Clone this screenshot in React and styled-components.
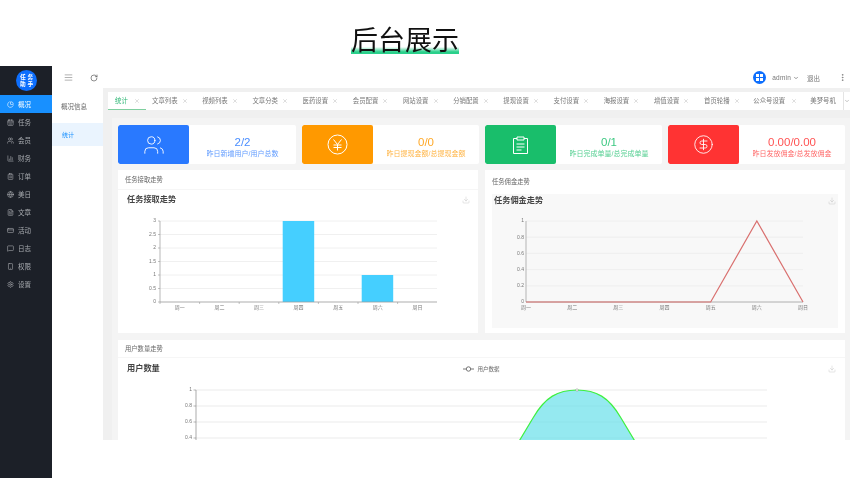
import React from 'react';
import styled, { createGlobalStyle } from 'styled-components';
import {
  AlignJustify,
  BarChart3,
  CalendarDays,
  ChevronDown,
  ClipboardList,
  Download,
  FileText,
  Globe,
  MessageSquare,
  MoreVertical,
  PieChart,
  RotateCw,
  Settings,
  Smartphone,
  Users,
  X,
  CreditCard,
  CircleDollarSign,
} from 'lucide-react';

const Global = createGlobalStyle`
  html, body {
    margin: 0;
    background: #fff;
    overflow: hidden;
    font-family: "Liberation Sans", "Noto Sans CJK SC", sans-serif;
  }
  * { box-sizing: border-box; }
`;

const s = {
  Page: styled.div`
    width: 850px;
    height: 478px;
    overflow: hidden;
    background: #fff;
    filter: blur(0.35px);
  `,
  TitleBar: styled.div`
    height: 66px;
    padding: 23px 0 0 351px;
  `,
  Title: styled.h1`
    display: inline-block;
    margin: 0;
    font-size: 27px;
    line-height: 31px;
    font-weight: 400;
    color: #111;
    font-family: "Noto Sans CJK SC", sans-serif;
    background: linear-gradient(0deg, #2ad08b, #2ad08b 30%, rgba(95, 232, 176, 0)) no-repeat left bottom / 100% 7px;
  `,
  Frame: styled.div`
    display: flex;
    height: 412px;
  `,
  Sidebar: styled.nav`
    flex: 0 0 52px;
    background: #1c2028;
  `,
  LogoWrap: styled.div`
    height: 29px;
    display: flex;
    align-items: center;
    justify-content: center;
  `,
  Logo: styled.div`
    width: 21px;
    height: 21px;
    border-radius: 50%;
    background: #0d6efd;
    display: grid;
    grid-template-columns: 1fr 1fr;
    padding: 4.6px;
    gap: 1.6px;
    color: #fff;
    font-size: 5.7px;
    font-weight: 700;
    line-height: 1;
    text-align: center;
  `,
  MenuItem: styled.div`
    height: 18px;
    display: flex;
    align-items: center;
    gap: 4px;
    padding-left: 7px;
    font-size: 6.5px;
    color: ${(p) => (p.$active ? '#fff' : '#a8abb0')};
    background: ${(p) => (p.$active ? '#1890ff' : 'transparent')};
  `,
  Main: styled.div`
    flex: 1;
    min-width: 0;
    display: flex;
    flex-direction: column;
  `,
  Header: styled.header`
    flex: 0 0 22px;
    display: flex;
    align-items: center;
    padding: 1px 3px 0 12px;
    color: #555;
  `,
  HeaderTool: styled.div`
    width: 26px;
    display: flex;
    justify-content: flex-start;
  `,
  HeaderRight: styled.div`
    margin-left: auto;
    display: flex;
    align-items: center;
    font-size: 6.5px;
    color: #777;
  `,
  UserName: styled.span`
    margin: 0 2px 0 6px;
    letter-spacing: 0.2px;
  `,
  Logout: styled.span`
    margin: 0 18px 0 8px;
  `,
  Body: styled.div`
    flex: 1;
    min-height: 0;
    display: flex;
  `,
  SubNav: styled.div`
    flex: 0 0 51px;
    background: #fff;
  `,
  SubTitle: styled.div`
    height: 35px;
    display: flex;
    align-items: center;
    padding-left: 9px;
    font-size: 6.5px;
    color: #666;
  `,
  SubItem: styled.div`
    height: 23px;
    display: flex;
    align-items: center;
    padding-left: 10px;
    font-size: 6px;
    color: #1890ff;
    background: #eaf4fe;
  `,
  Content: styled.main`
    flex: 1;
    min-width: 0;
    height: 352px;
    overflow: hidden;
    background: #f0f0f0;
    padding: 4px 0 0 5px;
  `,
  Tabs: styled.div`
    height: 18px;
    background: #fff;
    display: flex;
    position: relative;
    overflow: hidden;
  `,
  Tab: styled.div`
    flex: 0 0 ${(p) => p.$w}px;
    display: flex;
    align-items: center;
    padding-left: ${(p) => p.$pad}px;
    font-size: 6.4px;
    white-space: nowrap;
    color: ${(p) => (p.$active ? '#2bb673' : '#777')};
    border-bottom: 1px solid ${(p) => (p.$active ? '#7fcf9f' : 'transparent')};
    & > svg {
      margin-left: ${(p) => p.$gap}px;
      color: #bdbdbd;
    }
  `,
  TabArrow: styled.div`
    position: absolute;
    right: 0;
    top: 0;
    width: 7px;
    height: 18px;
    background: #fff;
    border-left: 1px solid #e4e4e4;
    color: #888;
    display: flex;
    align-items: center;
  `,
  Panel: styled.div`
    margin: 8px 0 0 4px;
    padding: 7px 5px 0 6px;
    background: #f4f4f4;
    display: flex;
    flex-direction: column;
    gap: 6px;
  `,
  StatRow: styled.div`
    display: grid;
    grid-template-columns: 178px 177px 177px 177px;
    column-gap: 6px;
    height: 39px;
  `,
  StatCard: styled.div`
    display: flex;
    background: #fff;
    border-radius: 2px;
    overflow: hidden;
    color: ${(p) => p.$color};
  `,
  StatIcon: styled.div`
    flex: 0 0 71px;
    display: flex;
    align-items: center;
    justify-content: center;
    background: ${(p) => p.$color};
    color: #fff;
    border-radius: 2px;
  `,
  StatText: styled.div`
    flex: 1;
    display: flex;
    flex-direction: column;
    align-items: center;
    justify-content: center;
    padding-top: 6px;
  `,
  StatValue: styled.div`
    font-size: 11.5px;
    line-height: 13px;
    opacity: 0.85;
  `,
  StatLabel: styled.div`
    font-size: 7px;
    line-height: 10px;
    opacity: 0.75;
    white-space: nowrap;
  `,
  ChartRow: styled.div`
    display: grid;
    grid-template-columns: 360px 360px;
    column-gap: 7px;
    height: 163px;
    margin-bottom: 1px;
  `,
  Card: styled.section`
    background: #fff;
    min-width: 0;
  `,
  CardHead: styled.div`
    height: ${(p) => p.$h}px;
    padding-left: 7px;
    display: flex;
    align-items: center;
    font-size: 6.3px;
    color: #666;
    border-bottom: 1px solid ${(p) => (p.$line ? '#f6f6f6' : 'transparent')};
  `,
  ShadedPlot: styled.div`
    margin: 0 7px;
    height: 134px;
    background: #f8f8f8;
  `,
  PlotHead: styled.div`
    height: ${(p) => p.$h}px;
    padding: 0 ${(p) => p.$right}px ${(p) => p.$lift || 0}px ${(p) => p.$left}px;
    display: grid;
    grid-template-columns: 1fr auto 1fr;
    align-items: center;
    color: #bbb;
    & > svg { justify-self: end; }
  `,
  PlotTitle: styled.div`
    font-size: 8.2px;
    line-height: 10px;
    font-weight: 700;
    color: #444;
  `,
  Legend: styled.div`
    display: flex;
    align-items: center;
    gap: 3px;
    font-size: 5.5px;
    color: #666;
  `,
  Plot: styled.svg`
    display: block;
    font-family: "Liberation Sans", "Noto Sans CJK SC", sans-serif;
  `,
};

const MENU = [
  ['概况', PieChart],
  ['任务', CalendarDays],
  ['会员', Users],
  ['财务', BarChart3],
  ['订单', ClipboardList],
  ['美日', Globe],
  ['文章', FileText],
  ['活动', CreditCard],
  ['日志', MessageSquare],
  ['权限', Smartphone],
  ['设置', Settings],
];

const TABS = ['文章列表', '视频列表', '文章分类', '医药设置', '会员配置', '网站设置', '分销配置', '提现设置', '支付设置', '海报设置', '增值设置', '首页轮播'];
const DAYS = ['周一', '周二', '周三', '周四', '周五', '周六', '周日'];

const Avatar = () => (
  <svg width="13" height="13" viewBox="0 0 13 13">
    <circle cx="6.5" cy="6.5" r="6.5" fill="#0d6efd" />
    <rect x="3" y="3" width="3" height="3" fill="#fff" />
    <rect x="7" y="3" width="3" height="3" fill="#fff" />
    <rect x="3" y="7" width="3" height="3" fill="#fff" />
    <rect x="7" y="7" width="3" height="3" fill="#fff" />
  </svg>
);

const YenIcon = () => (
  <svg width="21" height="21" viewBox="0 0 21 21" fill="none" stroke="currentColor" strokeWidth="1">
    <circle cx="10.5" cy="10.5" r="9.5" />
    <path d="M6.5 5.5l4 5 4-5M6.5 11h8M6.5 13.5h8M10.5 10.5v6" />
  </svg>
);

const BoardIcon = () => (
  <svg width="17" height="18" viewBox="0 0 17 18" fill="none" stroke="currentColor" strokeWidth="1">
    <path d="M5 2.5H1.5v15h14v-15H12" />
    <path d="M5 1h7v3H5zM4.5 8h8M4.5 11h8M4.5 14h5" />
  </svg>
);

const STATS = [
  { color: '#2979ff', value: '2/2', label: '昨日新增用户/用户总数', icon: <Users size={22} strokeWidth={1} /> },
  { color: '#ff9900', value: '0/0', label: '昨日提现金额/总提现金额', icon: <YenIcon /> },
  { color: '#19be6b', value: '0/1', label: '昨日完成单量/总完成单量', icon: <BoardIcon /> },
  { color: '#ff3333', value: '0.00/0.00', label: '昨日发放佣金/总发放佣金', icon: <CircleDollarSign size={21} strokeWidth={1} /> },
];

// shared axis text for the three plots
const Tick = ({ x, y, anchor = 'end', children }) => (
  <text x={x} y={y} fontSize="5" fill="#777" textAnchor={anchor} dominantBaseline="middle">{children}</text>
);

const TaskBars = () => {
  const ys = [['3', 221], ['2.5', 234.5], ['2', 248], ['1.5', 261.5], ['1', 275], ['0.5', 288.5], ['0', 302]];
  const step = 39.6;
  return (
    <s.Plot width="360" height="123" viewBox="118 210 360 123">
      {ys.map(([label, y]) => (
        <g key={label}>
          <line x1="160" x2="437" y1={y} y2={y} stroke="#ececec" strokeWidth="0.8" />
          <line x1="158" x2="160" y1={y} y2={y} stroke="#999" strokeWidth="0.6" />
          <Tick x={156} y={y}>{label}</Tick>
        </g>
      ))}
      <rect x="282.7" y="221" width="31.5" height="81" fill="#45cfff" />
      <rect x="361.7" y="275" width="31.5" height="27" fill="#45cfff" />
      <line x1="160" x2="160" y1="221" y2="302" stroke="#999" strokeWidth="0.7" />
      <line x1="160" x2="437" y1="302" y2="302" stroke="#999" strokeWidth="0.7" />
      {DAYS.map((d, i) => (
        <g key={d}>
          <line x1={160 + step * i} x2={160 + step * i} y1="302" y2="304" stroke="#999" strokeWidth="0.6" />
          <Tick x={179.8 + step * i} y={307.5} anchor="middle">{d}</Tick>
        </g>
      ))}
    </s.Plot>
  );
};

const CommissionLine = () => {
  const ys = [['1', 221], ['0.8', 237.2], ['0.6', 253.4], ['0.4', 269.6], ['0.2', 285.8], ['0', 302]];
  const step = 46.17;
  const px = [0, 1, 2, 3, 4, 5, 6].map((i) => 526 + step * i);
  const pts = px.map((x, i) => `${x},${i === 5 ? 221 : 302}`).join(' ');
  return (
    <s.Plot width="346" height="121" viewBox="492 207 346 121">
      {ys.map(([label, y]) => (
        <g key={label}>
          <line x1="526" x2="803" y1={y} y2={y} stroke="#ececec" strokeWidth="0.8" />
          <Tick x={524} y={y}>{label}</Tick>
        </g>
      ))}
      <line x1="526" x2="526" y1="221" y2="302" stroke="#999" strokeWidth="0.7" />
      <line x1="526" x2="803" y1="302" y2="302" stroke="#999" strokeWidth="0.7" />
      <polyline points={pts} fill="none" stroke="#d9706f" strokeWidth="1.2" />
      {DAYS.map((d, i) => (
        <Tick key={d} x={px[i]} y={307.5} anchor="middle">{d}</Tick>
      ))}
    </s.Plot>
  );
};

const UserArea = () => {
  const ys = [['1', 390], ['0.8', 406], ['0.6', 422], ['0.4', 438]];
  const curve = 'M518 443 L533 418 C545 397 558 390 577 390 C596 390 609 397 621 418 L636 443';
  return (
    <s.Plot width="727" height="60" viewBox="118 380 727 60">
      {ys.map(([label, y]) => (
        <g key={label}>
          <line x1="196" x2="767" y1={y} y2={y} stroke="#e6e6e6" strokeWidth="0.8" />
          <line x1="193.5" x2="196" y1={y} y2={y} stroke="#888" strokeWidth="0.6" />
          <Tick x={192} y={y}>{label}</Tick>
        </g>
      ))}
      <line x1="196" x2="196" y1="390" y2="440" stroke="#888" strokeWidth="0.7" />
      <path d={`${curve} Z`} fill="#5cdde8" fillOpacity="0.65" />
      <path d={curve} fill="none" stroke="#3ff03f" strokeWidth="1.2" />
      <circle cx="577" cy="390" r="1.2" fill="#fff" stroke="#888" strokeWidth="0.5" />
    </s.Plot>
  );
};

const LegendMark = () => (
  <svg width="11" height="6" viewBox="0 0 11 6" fill="none" stroke="#555" strokeWidth="0.8">
    <path d="M0 3h3M8 3h3" />
    <circle cx="5.5" cy="3" r="2.2" fill="#fff" />
  </svg>
);

const App = () => (
  <s.Page>
    <Global />
    <s.TitleBar>
      <s.Title>后台展示</s.Title>
    </s.TitleBar>
    <s.Frame>
      <s.Sidebar>
        <s.LogoWrap>
          <s.Logo>
            <span>任</span><span>务</span><span>助</span><span>手</span>
          </s.Logo>
        </s.LogoWrap>
        {MENU.map(([label, Icon], i) => (
          <s.MenuItem key={label} $active={i === 0}>
            <Icon size={7} />
            <span>{label}</span>
          </s.MenuItem>
        ))}
      </s.Sidebar>
      <s.Main>
        <s.Header>
          <s.HeaderTool><AlignJustify size={9} strokeWidth={1.2} /></s.HeaderTool>
          <s.HeaderTool><RotateCw size={8} /></s.HeaderTool>
          <s.HeaderRight>
            <Avatar />
            <s.UserName>admin</s.UserName>
            <ChevronDown size={6} strokeWidth={3} />
            <s.Logout>退出</s.Logout>
            <MoreVertical size={9} />
          </s.HeaderRight>
        </s.Header>
        <s.Body>
          <s.SubNav>
            <s.SubTitle>概况信息</s.SubTitle>
            <s.SubItem>统计</s.SubItem>
          </s.SubNav>
          <s.Content>
            <s.Tabs>
              <s.Tab $w={38} $pad={7} $gap={6} $active>统计<X size={6} /></s.Tab>
              {TABS.map((t) => (
                <s.Tab key={t} $w={50.2} $pad={6} $gap={4}>{t}<X size={6} /></s.Tab>
              ))}
              <s.Tab $w={57} $pad={5} $gap={6}>公众号设置<X size={6} /></s.Tab>
              <s.Tab $w={40} $pad={5} $gap={4}>美梦号机</s.Tab>
              <s.TabArrow><ChevronDown size={6} /></s.TabArrow>
            </s.Tabs>
            <s.Panel>
              <s.StatRow>
                {STATS.map((st) => (
                  <s.StatCard key={st.label} $color={st.color}>
                    <s.StatIcon $color={st.color}>{st.icon}</s.StatIcon>
                    <s.StatText>
                      <s.StatValue>{st.value}</s.StatValue>
                      <s.StatLabel>{st.label}</s.StatLabel>
                    </s.StatText>
                  </s.StatCard>
                ))}
              </s.StatRow>
              <s.ChartRow>
                <s.Card>
                  <s.CardHead $h={20} $line>任务接取走势</s.CardHead>
                  <s.PlotHead $h={20} $left={9} $right={8}>
                    <s.PlotTitle>任务接取走势</s.PlotTitle>
                    <span />
                    <Download size={8} strokeWidth={1.2} />
                  </s.PlotHead>
                  <TaskBars />
                </s.Card>
                <s.Card>
                  <s.CardHead $h={24}>任务佣金走势</s.CardHead>
                  <s.ShadedPlot>
                    <s.PlotHead $h={13} $left={2} $right={2}>
                      <s.PlotTitle>任务佣金走势</s.PlotTitle>
                      <span />
                      <Download size={8} strokeWidth={1.2} />
                    </s.PlotHead>
                    <CommissionLine />
                  </s.ShadedPlot>
                </s.Card>
              </s.ChartRow>
              <s.Card>
                <s.CardHead $h={18} $line>用户数量走势</s.CardHead>
                <s.PlotHead $h={22} $left={9} $right={9}>
                  <s.PlotTitle>用户数量</s.PlotTitle>
                  <s.Legend><LegendMark />用户数据</s.Legend>
                  <Download size={8} strokeWidth={1.2} />
                </s.PlotHead>
                <UserArea />
              </s.Card>
            </s.Panel>
          </s.Content>
        </s.Body>
      </s.Main>
    </s.Frame>
  </s.Page>
);

export default App;
